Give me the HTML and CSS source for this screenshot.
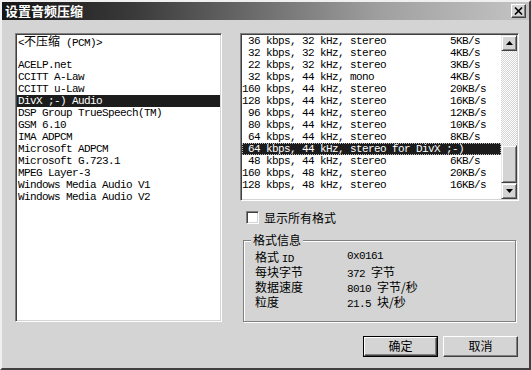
FILE: index.html
```html
<html>
<head>
<title>设置音频压缩</title>
<link rel="stylesheet" href="styles.css">
</head>
<body>

<div class="window">
	<div class="titlebar">
		<span class="title">设置音频压缩</span>
		<span class="closebtn">
			<svg width="9" height="8" viewBox="0 0 9 8"><path d="M1 0.5 L8 7.5 M8 0.5 L1 7.5" stroke="#000" stroke-width="1.6"/></svg>
		</span>
	</div>

	<div class="content">
		<div class="list leftlist">
			<div class="row">&lt;<span class="cjk">不压缩</span> (PCM)&gt;</div>
			<div class="row"></div>
			<div class="row">ACELP.net</div>
			<div class="row">CCITT A-Law</div>
			<div class="row">CCITT u-Law</div>
			<div class="row selected">DivX ;-) Audio</div>
			<div class="row">DSP Group TrueSpeech(TM)</div>
			<div class="row">GSM 6.10</div>
			<div class="row">IMA ADPCM</div>
			<div class="row">Microsoft ADPCM</div>
			<div class="row">Microsoft G.723.1</div>
			<div class="row">MPEG Layer-3</div>
			<div class="row">Windows Media Audio V1</div>
			<div class="row">Windows Media Audio V2</div>
		</div>

		<div class="rightcol">
			<div class="list formatlist">
				<div class="rows">
					<div class="row"><span class="rate"> 36 kbps, 32 kHz, stereo</span>5KB/s</div>
					<div class="row"><span class="rate"> 32 kbps, 32 kHz, stereo</span>4KB/s</div>
					<div class="row"><span class="rate"> 22 kbps, 32 kHz, stereo</span>3KB/s</div>
					<div class="row"><span class="rate"> 32 kbps, 44 kHz, mono</span>4KB/s</div>
					<div class="row"><span class="rate">160 kbps, 44 kHz, stereo</span>20KB/s</div>
					<div class="row"><span class="rate">128 kbps, 44 kHz, stereo</span>16KB/s</div>
					<div class="row"><span class="rate"> 96 kbps, 44 kHz, stereo</span>12KB/s</div>
					<div class="row"><span class="rate"> 80 kbps, 44 kHz, stereo</span>10KB/s</div>
					<div class="row"><span class="rate"> 64 kbps, 44 kHz, stereo</span>8KB/s</div>
					<div class="row selected focused"> 64 kbps, 44 kHz, stereo for DivX ;-)</div>
					<div class="row"><span class="rate"> 48 kbps, 44 kHz, stereo</span>6KB/s</div>
					<div class="row"><span class="rate">160 kbps, 48 kHz, stereo</span>20KB/s</div>
					<div class="row"><span class="rate">128 kbps, 48 kHz, stereo</span>16KB/s</div>
				</div>
				<div class="scrollbar">
					<div class="sbtn">
						<svg width="7" height="4" viewBox="0 0 7 4"><path d="M3.5 0 L7 4 L0 4 Z" fill="#000"/></svg>
					</div>
					<div class="track"></div>
					<div class="thumb"></div>
					<div class="sbtn">
						<svg width="7" height="4" viewBox="0 0 7 4"><path d="M0 0 L7 0 L3.5 4 Z" fill="#000"/></svg>
					</div>
				</div>
			</div>

			<div class="checkrow">
				<span class="checkbox"></span>
				<span class="checklabel">显示所有格式</span>
			</div>

			<div class="group">
				<span class="caption">格式信息</span>
				<div class="info">
					<div class="cell">格式 <span class="latin">ID</span></div>
					<div class="cell"><span class="latin">0x0161</span></div>
					<div class="cell">每块字节</div>
					<div class="cell"><span class="latin">372 </span>字节</div>
					<div class="cell">数据速度</div>
					<div class="cell"><span class="latin">8010 </span>字节/秒</div>
					<div class="cell">粒度</div>
					<div class="cell"><span class="latin">21.5 </span>块/秒</div>
				</div>
			</div>

			<div class="buttons">
				<div class="button default"><span class="face">确定</span></div>
				<div class="button"><span class="face">取消</span></div>
			</div>
		</div>
	</div>
</div>

</body>
</html>
```
FILE: styles.css
```css
body { margin: 0; background-color: #d4d4d4; }

.window
{
	width: 531px; height: 370px;
	box-sizing: border-box;
	background-color: #d4d4d4;
	border-style: solid; border-width: 2px;
	border-color: #f0f0f0 #404040 #404040 #f0f0f0;
	font-family: "Noto Sans CJK SC", sans-serif;
	font-size: 12px;
}

.titlebar
{
	height: 18px;
	display: flex; align-items: center; justify-content: space-between;
	padding: 0 3px 0 3px;
	background: linear-gradient(to right, #151515 0%, #3a3a3a 25%, #a0a0a0 72%, #c4c4c4 100%);
}
.title { color: white; font-weight: bold; font-size: 13px; line-height: 18px; }
.closebtn
{
	width: 13px; height: 12px;
	display: flex; align-items: center; justify-content: center;
	background-color: #d4d4d4;
	border: 1px solid; border-color: #fff #404040 #404040 #fff;
	box-shadow: inset -1px -1px 0 #808080;
}

.content { display: flex; padding: 13px 0 0 13px; }

.list
{
	background-color: white;
	border: 1px solid; border-color: #808080 #fff #fff #808080;
	box-shadow: inset 1px 1px 0 #404040, inset -1px -1px 0 #d4d4d4;
	padding: 1px;
	font-family: "Liberation Mono", monospace;
	font-size: 11px; letter-spacing: -0.6px;
	color: #000;
}
.row { height: 12px; line-height: 12px; white-space: pre; padding-left: 1px; }
.selected { background-color: #1c1c1c; color: white; }
.focused { outline: 1px dotted #bbb; outline-offset: -1px; }
.cjk { font-family: "Noto Sans CJK SC", sans-serif; font-size: 12px; letter-spacing: 0; }
.latin { font-family: "Liberation Mono", monospace; font-size: 11px; letter-spacing: -0.6px; }

.leftlist { width: 203px; height: 285px; }

.rightcol { margin-left: 18px; width: 279px; display: flex; flex-direction: column; }

.formatlist { height: 164px; display: flex; }
.formatlist .rows { width: 260px; }
.formatlist .row { padding-left: 0; }
.rate { display: inline-block; width: 208px; }

.scrollbar { width: 16px; display: flex; flex-direction: column; }
.sbtn, .thumb
{
	box-sizing: border-box;
	background-color: #d4d4d4;
	border: 1px solid; border-color: #e8e8e8 #404040 #404040 #e8e8e8;
	box-shadow: inset 1px 1px 0 #fff, inset -1px -1px 0 #808080;
}
.sbtn { height: 16px; display: flex; align-items: center; justify-content: center; }
.thumb { height: 38px; }
.track
{
	flex: 1;
	background: repeating-conic-gradient(#d4d4d4 0 25%, #fff 0 50%) 0 0 / 2px 2px;
}

.checkrow { display: flex; align-items: center; margin-top: 10px; margin-left: 6px; height: 13px; }
.checkbox
{
	width: 9px; height: 9px;
	background-color: white;
	border: 1px solid; border-color: #808080 #fff #fff #808080;
	box-shadow: inset 1px 1px 0 #404040, inset -1px -1px 0 #d4d4d4;
	padding: 1px;
}
.checklabel { margin-left: 5px; line-height: 13px; }

.group
{
	position: relative;
	margin: 16px 0 0 3px;
	width: 271px; height: 80px;
	border: 1px solid #808080;
	box-shadow: 1px 1px 0 #fff, inset 1px 1px 0 #fff;
}
.caption
{
	position: absolute; top: -9px; left: 7px;
	padding: 0 2px;
	line-height: 16px;
	background-color: #d4d4d4;
}
.info
{
	display: grid; grid-template-columns: 92px 160px;
	grid-template-rows: repeat(4, 15px);
	padding: 8px 0 0 11px;
}
.cell { height: 15px; line-height: 15px; white-space: nowrap; }

.buttons { display: flex; justify-content: flex-end; gap: 5px; margin-top: 14px; margin-right: 1px; }
.button
{
	width: 75px; height: 21px;
	box-sizing: border-box;
	display: flex;
	border: 1px solid; border-color: #fff #404040 #404040 #fff;
	box-shadow: inset -1px -1px 0 #808080;
}
.button .face { flex: 1; text-align: center; line-height: 18px; }
.button.default { border-color: #000; box-shadow: none; }
.button.default .face
{
	border: 1px solid; border-color: #fff #404040 #404040 #fff;
	box-shadow: inset -1px -1px 0 #808080;
	line-height: 16px;
}
```
